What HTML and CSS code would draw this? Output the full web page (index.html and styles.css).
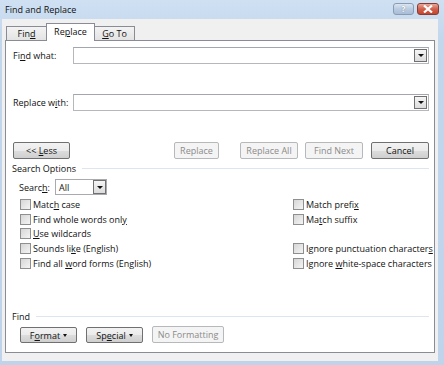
FILE: index.html
```html
<!DOCTYPE html>
<html lang="en">
<head>
<meta charset="utf-8"/>
<link rel="stylesheet" href="styles.css">
</head>
<body>
<div id="window">
    <div id="titlebar">
        <span class="title">Find and Replace</span>
        <div class="capbtns">
            <div class="capbtn help">?</div>
            <div class="capbtn close">
                <svg width="10" height="8" viewBox="0 0 10 8"><path d="M1 0.5 L9 7.5 M9 0.5 L1 7.5" stroke="#fff" stroke-width="2.2"/></svg>
            </div>
        </div>
    </div>
    <div id="client">
        <div id="tabs">
            <div class="tab">Fin<u>d</u></div>
            <div class="tab active">Re<u>p</u>lace</div>
            <div class="tab"><u>G</u>o To</div>
        </div>
        <div id="panel">
            <div class="fieldrow">
                <label>Fi<u>n</u>d what:</label>
                <div class="combo"><div class="dropbtn"><i></i></div></div>
            </div>
            <div class="fieldrow replrow">
                <label>Replace w<u>i</u>th:</label>
                <div class="combo"><div class="dropbtn"><i></i></div></div>
            </div>
            <div class="btnrow">
                <button class="btn less">&lt;&lt; <u>L</u>ess</button>
                <span class="spacer"></span>
                <button class="btn disabled repl">Replace</button>
                <button class="btn disabled replall">Replace All</button>
                <button class="btn disabled">Find Next</button>
                <button class="btn cancel">Cancel</button>
            </div>
            <div class="group"><span>Search Options</span></div>
            <div class="searchrow">
                <label>Searc<u>h</u>:</label>
                <div class="select"><span>All</span><div class="dropbtn"><i></i></div></div>
            </div>
            <div class="opts">
                <div class="col">
                    <div class="chk"><span class="box"></span><span>Matc<u>h</u> case</span></div>
                    <div class="chk"><span class="box"></span><span>Find whole words onl<u>y</u></span></div>
                    <div class="chk"><span class="box"></span><span><u>U</u>se wildcards</span></div>
                    <div class="chk"><span class="box"></span><span>Sounds li<u>k</u>e (English)</span></div>
                    <div class="chk"><span class="box"></span><span>Find all <u>w</u>ord forms (English)</span></div>
                </div>
                <div class="col">
                    <div class="chk"><span class="box"></span><span>Match prefi<u>x</u></span></div>
                    <div class="chk"><span class="box"></span><span>Ma<u>t</u>ch suffix</span></div>
                    <div class="chk empty"></div>
                    <div class="chk"><span class="box"></span><span>Ignore punctuation character<u>s</u></span></div>
                    <div class="chk"><span class="box"></span><span>Ignore <u>w</u>hite-space characters</span></div>
                </div>
            </div>
            <div class="group findgroup"><span>Find</span></div>
            <div class="bottomrow">
                <button class="btn menu"><span>F<u>o</u>rmat</span><i></i></button>
                <button class="btn menu"><span>Sp<u>e</u>cial</span><i></i></button>
                <button class="btn disabled nofmt">No Formatting</button>
            </div>
        </div>
    </div>
</div>
</body>
</html>
```

FILE: styles.css
```css
html, body {
    margin:0;
    padding:0;
}
body {
    background:#c4d8ee;
    font-family: "Open Sans", "Noto Sans", sans-serif;
    font-size:9px;
    color:#111;
    white-space:nowrap;
}
u {
    text-decoration-thickness:1px;
    text-underline-offset:1px;
}
#window {
    width:444px;
    height:365px;
    box-sizing:border-box;
    padding:0 6px 8px 2px;
    background: linear-gradient(#cfe0f3, #c2d6ec 40px, #bfd4eb);
}
#titlebar {
    height:19px;
    display:flex;
    align-items:center;
    justify-content:space-between;
    padding-left:3px;
}
#titlebar .title {
    font-size:9px;
    color:#111;
}
.capbtns {
    display:flex;
    gap:3px;
    margin-right:-1px;
    margin-top:-2px;
}
.capbtn {
    width:21px;
    height:12px;
    border:1px solid #8a9cb3;
    border-radius:3px;
    display:flex;
    align-items:center;
    justify-content:center;
    box-sizing:border-box;
}
.capbtn.help {
    background: linear-gradient(#dbe5f1, #b9cbe0 50%, #a9bdd6);
    color:#fff;
    font-weight:bold;
    font-size:9px;
    text-shadow:0 0 1px #56697f;
}
.capbtn.close {
    width:22px;
    border-color:#8b3b32;
    background: linear-gradient(#e9a99b, #d0604c 50%, #c3452f);
}
#client {
    background:#f0f0f0;
    height:338px;
    padding:4px 3px 0 3px;
}
#tabs {
    display:flex;
    align-items:flex-end;
    height:17px;
    padding-left:1px;
    position:relative;
    z-index:1;
}
.tab {
    height:14px;
    box-sizing:border-box;
    border:1px solid #898c95;
    border-bottom:none;
    background: linear-gradient(#f3f3f3, #e3e3e3);
    text-align:center;
    line-height:13px;
    margin-right:-1px;
    width:41px;
}
.tab.active {
    height:18px;
    margin-bottom:-1px;
    background:#fff;
    width:49px;
    line-height:15px;
    position:relative;
    z-index:2;
}
#panel {
    width:430px;
    height:313px;
    box-sizing:border-box;
    border:1px solid #898c95;
    background:#fff;
    padding:0 5px 0 7px;
}
.fieldrow {
    display:flex;
    align-items:center;
    margin-top:6px;
    height:17px;
}
.replrow {
    margin-top:30px;
}
.fieldrow label {
    width:60px;
}
.combo {
    flex:1;
    height:17px;
    box-sizing:border-box;
    border:1px solid #b5b7bc;
    border-top-color:#a3a6ad;
    display:flex;
    justify-content:flex-end;
    align-items:center;
    padding-right:1px;
}
.dropbtn {
    width:11px;
    height:11px;
    border:1px solid #707070;
    background: linear-gradient(#f5f5f5, #dcdcdc);
    display:flex;
    align-items:center;
    justify-content:center;
}
.dropbtn i, .menu i {
    display:block;
    width:0;
    height:0;
    border-left:3px solid transparent;
    border-right:3px solid transparent;
    border-top:3px solid #111;
}
.btnrow {
    display:flex;
    margin-top:31px;
    height:17px;
}
.spacer {
    flex:1;
}
.btn {
    font-family:inherit;
    font-size:9px;
    color:#111;
    height:17px;
    box-sizing:border-box;
    border:1px solid #707070;
    border-radius:2px;
    background: linear-gradient(#f2f2f2, #ebebeb 50%, #dddddd 51%, #cfcfcf);
    padding:0;
    width:58px;
    margin-left:7px;
}
.btn.less {
    width:57px;
    margin-left:0;
}
.btn.repl {
    width:45px;
    margin-left:0;
}
.btn.replall {
    margin-left:21px;
}
.btn.cancel {
    margin-left:8px;
}
.btn.disabled {
    border-color:#b6b9bc;
    background:#f4f4f4;
    color:#8b8b8b;
}
.group {
    display:flex;
    align-items:center;
    gap:6px;
    height:12px;
    margin-top:3px;
    margin-left:-1px;
}
.group::after {
    content:"";
    flex:1;
    border-top:1px solid #dde6ef;
    margin-top:1px;
}
.searchrow {
    display:flex;
    align-items:center;
    margin-top:5px;
    margin-left:6px;
    height:16px;
}
.searchrow label {
    width:36px;
}
.select {
    width:52px;
    height:16px;
    box-sizing:border-box;
    border:1px solid #a8aaaf;
    display:flex;
    justify-content:space-between;
    align-items:center;
    padding-left:3px;
}
.select .dropbtn {
    height:12px;
}
.opts {
    display:flex;
    margin-left:6px;
    margin-top:2px;
}
.col {
    width:273px;
    flex-shrink:0;
}
.col + .col {
    width:auto;
    flex-shrink:1;
}
.chk {
    display:flex;
    align-items:center;
    height:14.7px;
}
.box {
    width:9px;
    height:9px;
    border:1px solid #8e8f8f;
    background: linear-gradient(135deg, #d6d6d6, #f4f4f4);
    margin-right:2px;
    margin-left:1px;
}
.findgroup {
    margin-top:40px;
}
.bottomrow {
    display:flex;
    margin-left:7px;
    margin-top:5px;
    gap:9px;
}
.bottomrow .btn {
    margin-left:0;
    width:57px;
    height:16px;
    display:flex;
    align-items:center;
    justify-content:center;
    gap:3px;
}
.menu i {
    border-left-width:2px;
    border-right-width:2px;
    border-top-width:3px;
}
.btn.nofmt {
    width:72px;
    height:17px;
    margin-top:-1px;
}
```
